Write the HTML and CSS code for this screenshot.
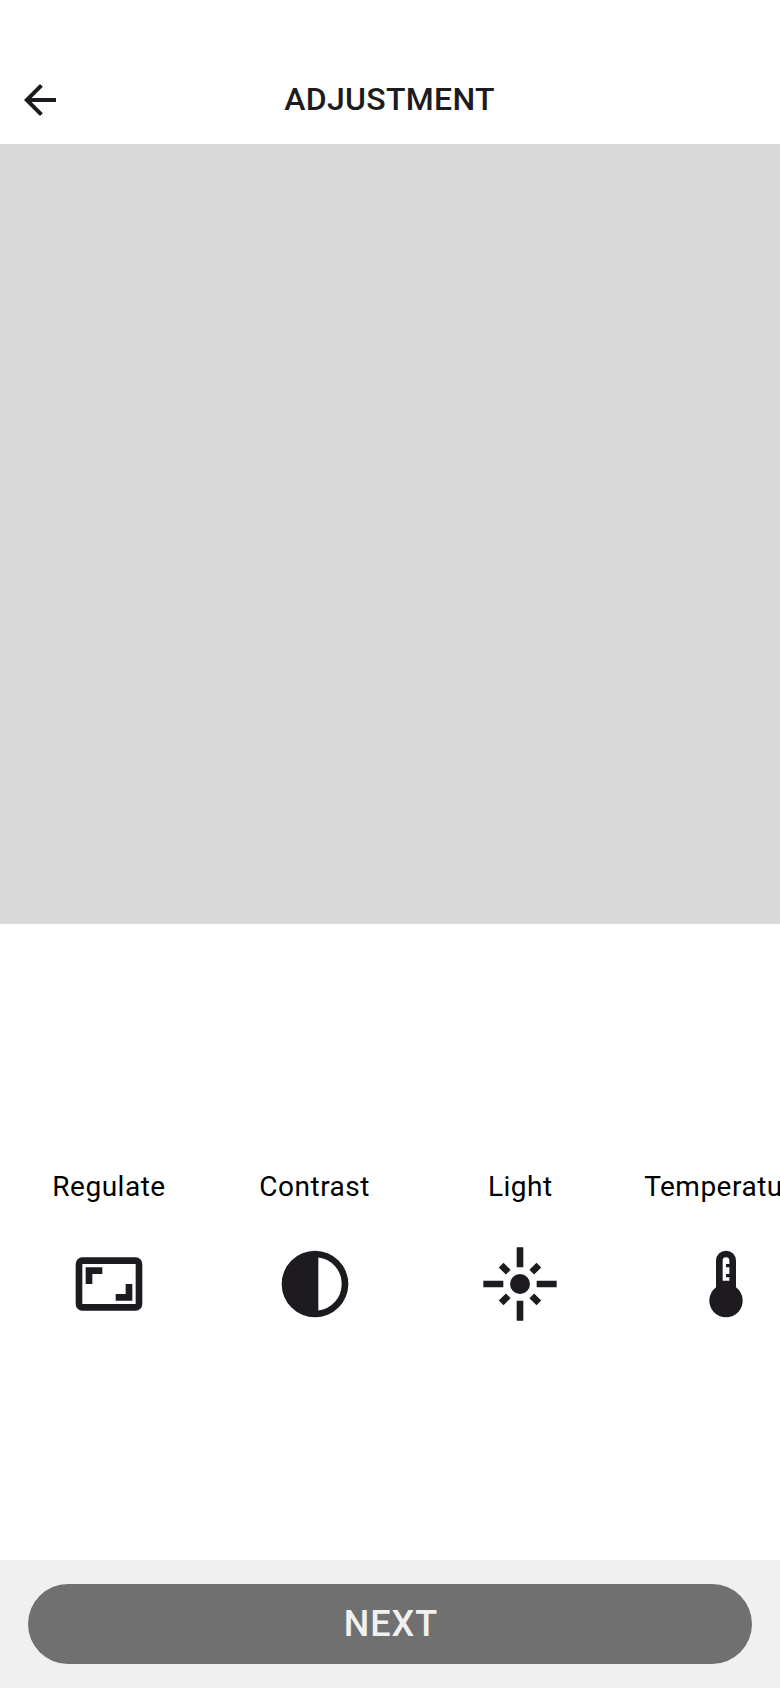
FILE: index.html
```html
<!DOCTYPE html>
<html lang="en">
<head>
<meta charset="utf-8">
<title>Adjustment</title>
<link rel="stylesheet" href="styles.css">
</head>
<body>
<div class="screen">
  <header class="top-bar">
    <button class="back" aria-label="Back">
      <svg class="back-icon" viewBox="0 0 24 24"><path d="M7.825 13l5.6 5.6L12 20l-8-8 8-8 1.425 1.4-5.6 5.6H20v2z"/></svg>
    </button>
    <h1 class="title">ADJUSTMENT</h1>
  </header>
  <div class="preview"></div>
  <main class="tools">
    <div class="tool">
      <span class="tool-label">Regulate</span>
      <svg class="tool-icon" viewBox="0 0 24 24"><path fill-rule="evenodd" d="M4 4h16a2 2 0 0 1 2 2v12a2 2 0 0 1-2 2H4a2 2 0 0 1-2-2V6a2 2 0 0 1 2-2zM4 6v12h16V6zM5 12V7h5v2H7v3zM19 12v5h-5v-2h3v-3z"/></svg>
    </div>
    <div class="tool">
      <span class="tool-label">Contrast</span>
      <svg class="tool-icon" viewBox="0 0 24 24"><path fill-rule="evenodd" d="M12 2a10 10 0 1 1 0 20 10 10 0 0 1 0-20zM13 4.05v15.9q3-.35 5-2.6T20 12t-1.987-5.35T13 4.05z"/></svg>
    </div>
    <div class="tool">
      <span class="tool-label">Light</span>
      <svg class="tool-icon" viewBox="0 0 24 24"><path d="M7 11H1v2h6zM9.17 7.76L7.05 5.64 5.64 7.05l2.12 2.12zM13 1h-2v6h2zM18.36 7.05l-1.41-1.41-2.12 2.12 1.41 1.41zM17 11v2h6v-2zM12 9a3 3 0 1 0 0 6 3 3 0 0 0 0-6zM14.83 16.24l2.12 2.12 1.41-1.41-2.12-2.12zM5.64 16.95l1.41 1.41 2.12-2.12-1.41-1.41zM11 23h2v-6h-2z"/></svg>
    </div>
    <div class="tool">
      <span class="tool-label">Temperature</span>
      <svg class="tool-icon" viewBox="0 0 24 24"><path fill-rule="evenodd" d="M9 13V5a3 3 0 0 1 6 0v8a5 5 0 1 1-6 0zM11 11h2v-1h-1V9h1V7h-1V6h1V5a1 1 0 0 0-2 0z"/></svg>
    </div>
  </main>
  <footer class="bottom-bar">
    <button class="next">NEXT</button>
  </footer>
</div>
</body>
</html>
```
FILE: styles.css
```css
* {
  box-sizing: border-box;
}

body {
  margin: 0;
  background: #fff;
  font-family: Roboto, sans-serif;
}

.screen {
  display: flex;
  flex-direction: column;
  width: 780px;
  height: 1688px;
  overflow: hidden;
}

.top-bar {
  display: grid;
  grid-template-columns: 48px 1fr 48px;
  align-items: center;
  height: 144px;
  padding: 56px 16px 0;
  color: #1d1b20;
}

.back {
  width: 48px;
  height: 48px;
  padding: 0;
  border: 0;
  background: none;
}

.back-icon {
  display: block;
  width: 48px;
  height: 48px;
  fill: #1d1b20;
}

.title {
  margin: 0;
  padding: 0 1px 2px 0;
  font-size: 32px;
  font-weight: 500;
  line-height: 48px;
  letter-spacing: 0.3px;
  text-align: center;
}

.preview {
  height: 780px;
  background: #d9d9d9;
}

.tools {
  display: grid;
  grid-template-columns: repeat(4, 205.67px);
  align-content: start;
  flex: 1;
  padding: 243px 0 0 6.2px;
}

.tool {
  display: flex;
  flex-direction: column;
  align-items: center;
  gap: 37px;
}

.tool-label {
  color: #000;
  font-size: 28px;
  line-height: 40px;
  letter-spacing: 0.5px;
}

.tool-icon {
  width: 80px;
  height: 80px;
  fill: #1d1b20;
}

.bottom-bar {
  height: 128px;
  padding: 24px 28px;
  background: #f0f0f0;
}

.next {
  display: block;
  width: 100%;
  height: 80px;
  padding: 0 0 0 2px;
  border: 0;
  border-radius: 40px;
  background: #707070;
  color: #f0f0f0;
  font: 500 36px/80px Roboto, sans-serif;
  letter-spacing: 1px;
}
```
